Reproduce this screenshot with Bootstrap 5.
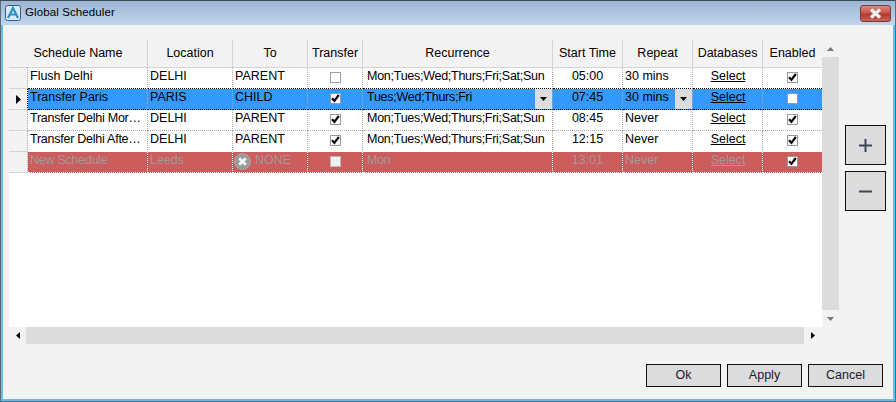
<!DOCTYPE html>
<html lang="en">
<head>
<meta charset="utf-8">
<title>Global Scheduler</title>
<link href="https://cdn.jsdelivr.net/npm/bootstrap@5.3.0/dist/css/bootstrap.min.css" rel="stylesheet">
<style>
html,body{margin:0;padding:0;background:#f3f3f3;overflow:hidden}
body{font-family:"Liberation Sans",Arial,sans-serif;font-size:12.5px;color:#000}
.gs-win{width:896px;height:402px;box-sizing:border-box;background:#62bfe9;padding:0 0 0 0;display:flex;flex-direction:column}
.gs-title{height:25px;flex:none;padding:0 5px 0 4px;background:linear-gradient(#9db5d2,#c0d5ee);border-top:1px solid #3d4a58;border-left:1px solid #5b6b7a;border-right:1px solid #5b6b7a;display:flex;align-items:center;font-size:11.5px;letter-spacing:.1px}
.gs-title svg.gs-logo{margin-right:4px;flex:none}
.gs-close{margin-left:auto;margin-right:-1px;width:31px;height:17px;border:1px solid #7a3a3a;border-radius:3px;background:linear-gradient(#d98a80 0,#c9564a 45%,#b03a2e 55%,#c9665a 100%);display:flex;align-items:center;justify-content:center;padding:0}
.gs-frame{flex:1;min-height:0;display:flex;padding:0 3px 3px;box-shadow:inset 1px 0 #5b6b7a,inset -1px 0 #5b6b7a,inset 0 -1px #5b6b7a}
.gs-inner{flex:1;min-width:0;background:#f3f3f3;display:flex;flex-direction:column}
.gs-main{flex:1;display:flex;padding:15px 0 0 6px;min-height:0}
.gs-gridwrap{width:830px;flex:none;display:grid;grid-template-columns:813px 17px;grid-template-rows:287px 17px}
.gs-sheet{background:#fff;overflow:hidden}
.gs-tbl{border-collapse:separate;border-spacing:0;table-layout:fixed;width:813px;margin:0}
.gs-tbl th,.gs-tbl td{padding:0;box-sizing:border-box;font-weight:400;white-space:nowrap;overflow:hidden;vertical-align:top;font-size:12.5px}
.gs-tbl thead th{height:28px;background:#f3f3f3;text-align:center;line-height:26px;border-right:1px solid #d4d4d4;border-bottom:1px solid #d4d4d4}
.gs-tbl thead th.gs-corner{border-right:0}
.gs-tbl td{height:21px;line-height:16px;border-right:1px dotted #a8a8a8;border-bottom:1px dotted #a8a8a8;background:#fff}
.gs-tbl td.gs-rh{background:#f3f3f3;border-bottom:1px solid #d4d4d4;position:relative}
.gs-txt{padding-left:2px;display:block;overflow:hidden}
.gs-pad4{padding-left:4px;letter-spacing:-.27px}
.gs-tight{letter-spacing:-.25px}
.gs-ctr{text-align:center}
.gs-tbl a{color:inherit;text-decoration:underline;padding-left:1px}
.gs-sel td:not(.gs-rh){background:#3399ff;border-bottom:1px dotted #000}
.gs-sel td.gs-rh{border-right:1px dotted #000}
.gs-sel td:last-child{border-right:1px dotted #000}
.gs-prev td:not(.gs-rh){border-bottom:1px dotted #000}
.gs-new td:not(.gs-rh){background:#cd5c5c;color:#a09a9a;border-right:1px dotted #fff;border-bottom:1px dotted #fff}
.gs-prevnew td:not(.gs-rh){border-bottom:1px dotted #fff}
.gs-tbl td:last-child{border-right:0}
.gs-chk{display:inline-block;width:11px;height:11px;border:1px solid #9a9a9a;background:#fff;margin-top:4px;line-height:0;vertical-align:top}
.gs-chk svg{display:block;margin:0}
.gs-chk.gs-dim{background:#f0f0f0;border-color:#b8b8b8}
.gs-chk.gs-off{border-color:#a0a0a0}
.gs-ddcell{display:flex;justify-content:space-between}
.gs-dd{width:17px;height:20px;background:#dcdcdc;flex:none;display:flex;align-items:center;justify-content:center}
.gs-none{display:flex;align-items:flex-start;padding-left:1px}
.gs-none svg{flex:none;margin:1px 4px 0 0}
.gs-sb-v{grid-column:2;grid-row:1;background:#dcdcdc;display:flex;flex-direction:column}
.gs-sb-h{grid-column:1;grid-row:2;background:#dcdcdc;display:flex}
.gs-sb-btn{width:17px;height:17px;background:#f3f3f3;flex:none;display:flex;align-items:center;justify-content:center}
.gs-sb-end{width:18px;background:#f3f3f3;flex:none;display:flex;align-items:center;justify-content:center}
.gs-sb-fill{flex:1}
.gs-sb-c{grid-column:2;grid-row:2;background:#f3f3f3}
.gs-side{display:flex;flex-direction:column;gap:6px;padding:85px 0 0 6px}
.gs-sq{width:41px;height:40px;background:#dcdcdc;border:1px solid #111;border-radius:0;padding:0;display:flex;align-items:center;justify-content:center}
.gs-foot{flex:none;display:flex;justify-content:flex-end;gap:6px;padding:0 10px 12px 0}
.gs-btn{width:75px;height:23px;background:#dcdcdc;border:1px solid #111;border-radius:0;padding:0;font-size:12.5px;line-height:19px;color:#1a1a2a}
.gs-btn:hover,.gs-btn:active{background:#dcdcdc;border-color:#111;color:#1a1a2a}
</style>
</head>
<body>
<svg width="0" height="0" class="position-absolute">
<defs>
<symbol id="gs-tick" viewBox="0 0 9 9"><path d="M1 4.2 3.4 6.8 7.8 1" fill="none" stroke="#000" stroke-width="2.2"/></symbol>
<symbol id="gs-down" viewBox="0 0 9 5"><path d="M0 0H9L4.5 5Z" fill="#000"/></symbol>
</defs>
</svg>
<div class="gs-win">
  <div class="gs-title">
    <svg class="gs-logo" width="16" height="16" viewBox="0 0 16 16"><rect x=".5" y=".5" width="15" height="15" rx="2" fill="#dbe9f5" stroke="#2f5f8a"/><path d="M3 13 8 3l5 10M4.5 9.5h7" fill="none" stroke="#2c8fc4" stroke-width="2.2"/></svg>
    <span>Global Scheduler</span>
    <button type="button" class="gs-close" aria-label="Close"><svg width="15" height="11" viewBox="0 0 15 11"><path d="M3 1.5 12 9.5M12 1.5 3 9.5" stroke="#f2f2f2" stroke-width="3.2"/></svg></button>
  </div>
  <div class="gs-frame">
  <div class="gs-inner">
  <div class="gs-main">
    <div class="gs-gridwrap">
      <div class="gs-sheet">
        <table class="gs-tbl">
          <colgroup><col style="width:19px"><col style="width:120px"><col style="width:85px"><col style="width:75px"><col style="width:55px"><col style="width:190px"><col style="width:70px"><col style="width:70px"><col style="width:70px"><col style="width:59px"></colgroup>
          <thead><tr><th colspan="2">Schedule Name</th><th>Location</th><th>To</th><th>Transfer</th><th>Recurrence</th><th>Start Time</th><th>Repeat</th><th>Databases</th><th class="gs-corner">Enabled</th></tr></thead>
          <tbody>
            <tr class="gs-prev"><td class="gs-rh"></td><td><span class="gs-txt">Flush Delhi</span></td><td><span class="gs-txt">DELHI</span></td><td><span class="gs-txt">PARENT</span></td><td class="gs-ctr"><span class="gs-chk gs-off"></span></td><td><span class="gs-txt gs-pad4">Mon;Tues;Wed;Thurs;Fri;Sat;Sun</span></td><td class="gs-ctr">05:00</td><td><span class="gs-txt">30 mins</span></td><td class="gs-ctr"><a href="#">Select</a></td><td class="gs-ctr"><span class="gs-chk"><svg width="9" height="9"><use href="#gs-tick"/></svg></span></td></tr>
            <tr class="gs-sel"><td class="gs-rh"><svg class="position-absolute" style="left:7px;top:6px" width="5" height="9" viewBox="0 0 5 9"><path d="M0 0 5 4.5 0 9Z"/></svg></td><td><span class="gs-txt">Transfer Paris</span></td><td><span class="gs-txt">PARIS</span></td><td><span class="gs-txt">CHILD</span></td><td class="gs-ctr"><span class="gs-chk"><svg width="9" height="9"><use href="#gs-tick"/></svg></span></td><td><div class="gs-ddcell"><span class="gs-txt gs-pad4">Tues;Wed;Thurs;Fri</span><span class="gs-dd"><svg width="7" height="4"><use href="#gs-down"/></svg></span></div></td><td class="gs-ctr">07:45</td><td><div class="gs-ddcell"><span class="gs-txt">30 mins</span><span class="gs-dd"><svg width="7" height="4"><use href="#gs-down"/></svg></span></div></td><td class="gs-ctr"><a href="#">Select</a></td><td class="gs-ctr"><span class="gs-chk"></span></td></tr>
            <tr><td class="gs-rh"></td><td><span class="gs-txt gs-tight">Transfer Delhi Mor…</span></td><td><span class="gs-txt">DELHI</span></td><td><span class="gs-txt">PARENT</span></td><td class="gs-ctr"><span class="gs-chk"><svg width="9" height="9"><use href="#gs-tick"/></svg></span></td><td><span class="gs-txt gs-pad4">Mon;Tues;Wed;Thurs;Fri;Sat;Sun</span></td><td class="gs-ctr">08:45</td><td><span class="gs-txt">Never</span></td><td class="gs-ctr"><a href="#">Select</a></td><td class="gs-ctr"><span class="gs-chk"><svg width="9" height="9"><use href="#gs-tick"/></svg></span></td></tr>
            <tr class="gs-prevnew"><td class="gs-rh"></td><td><span class="gs-txt gs-tight">Transfer Delhi Afte…</span></td><td><span class="gs-txt">DELHI</span></td><td><span class="gs-txt">PARENT</span></td><td class="gs-ctr"><span class="gs-chk"><svg width="9" height="9"><use href="#gs-tick"/></svg></span></td><td><span class="gs-txt gs-pad4">Mon;Tues;Wed;Thurs;Fri;Sat;Sun</span></td><td class="gs-ctr">12:15</td><td><span class="gs-txt">Never</span></td><td class="gs-ctr"><a href="#">Select</a></td><td class="gs-ctr"><span class="gs-chk"><svg width="9" height="9"><use href="#gs-tick"/></svg></span></td></tr>
            <tr class="gs-new"><td class="gs-rh"></td><td><span class="gs-txt gs-tight">New Schedule</span></td><td><span class="gs-txt">Leeds</span></td><td><div class="gs-none"><svg width="17" height="17" viewBox="0 0 17 17"><circle cx="8.5" cy="8.5" r="8" fill="#9a9a9a" stroke="#b0a6a6"/><path d="M5.2 5.2l6.6 6.6M11.8 5.2l-6.6 6.6" stroke="#f4f4f4" stroke-width="2.8"/></svg><span>NONE</span></div></td><td class="gs-ctr"><span class="gs-chk gs-dim"></span></td><td><span class="gs-txt gs-pad4">Mon</span></td><td class="gs-ctr">13:01</td><td><span class="gs-txt">Never</span></td><td class="gs-ctr"><a href="#">Select</a></td><td class="gs-ctr"><span class="gs-chk"><svg width="9" height="9"><use href="#gs-tick"/></svg></span></td></tr>
          </tbody>
        </table>
      </div>
      <div class="gs-sb-v">
        <div class="gs-sb-btn"><svg width="7" height="4" viewBox="0 0 7 4"><path d="M3.5 0 7 4H0Z" fill="#777"/></svg></div>
        <div class="gs-sb-fill"></div>
        <div class="gs-sb-btn"><svg width="7" height="4" viewBox="0 0 7 4"><path d="M0 0H7L3.5 4Z" fill="#777"/></svg></div>
      </div>
      <div class="gs-sb-h">
        <div class="gs-sb-btn"><svg width="4" height="7" viewBox="0 0 4 7"><path d="M4 0V7L0 3.5Z"/></svg></div>
        <div class="gs-sb-fill"></div>
        <div class="gs-sb-end"><svg width="4" height="7" viewBox="0 0 4 7"><path d="M0 0V7L4 3.5Z"/></svg></div>
      </div>
      <div class="gs-sb-c"></div>
    </div>
    <div class="gs-side">
      <button type="button" class="gs-sq" aria-label="Add"><svg width="13" height="13" viewBox="0 0 13 13"><path d="M0 6.5H13M6.5 0V13" stroke="#3c4656" stroke-width="2"/></svg></button>
      <button type="button" class="gs-sq" aria-label="Remove"><svg width="13" height="13" viewBox="0 0 13 13"><path d="M0 6.5H13" stroke="#3c4656" stroke-width="2"/></svg></button>
    </div>
  </div>
  <div class="gs-foot">
    <button type="button" class="btn gs-btn">Ok</button>
    <button type="button" class="btn gs-btn">Apply</button>
    <button type="button" class="btn gs-btn">Cancel</button>
  </div>
  </div>
  </div>
</div>
</body>
</html>
